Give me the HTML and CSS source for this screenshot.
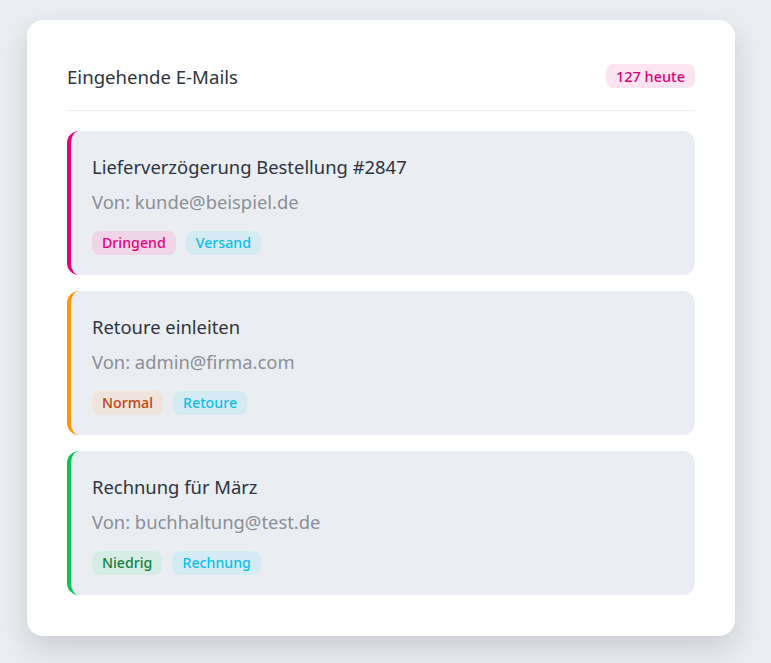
FILE: index.html
```html
<!DOCTYPE html>
<html lang="de">
<head>
<meta charset="utf-8">
<link rel="stylesheet" href="styles.css">
</head>
<body>
<div class="card">
  <div class="header">
    <span class="heading">Eingehende E-Mails</span>
    <span class="count">127 heute</span>
  </div>
  <div class="list">
    <div class="mail mail-urgent">
      <div class="subject">Lieferverzögerung Bestellung #2847</div>
      <div class="from">Von: kunde@beispiel.de</div>
      <div class="tags">
        <span class="tag tag-urgent">Dringend</span>
        <span class="tag tag-cat">Versand</span>
      </div>
    </div>
    <div class="mail mail-normal">
      <div class="subject">Retoure einleiten</div>
      <div class="from">Von: admin@firma.com</div>
      <div class="tags">
        <span class="tag tag-normal">Normal</span>
        <span class="tag tag-cat">Retoure</span>
      </div>
    </div>
    <div class="mail mail-low">
      <div class="subject">Rechnung für März</div>
      <div class="from">Von: buchhaltung@test.de</div>
      <div class="tags">
        <span class="tag tag-low">Niedrig</span>
        <span class="tag tag-cat">Rechnung</span>
      </div>
    </div>
  </div>
</div>
</body>
</html>
```
FILE: styles.css
```css
* { box-sizing: border-box; }
html, body { margin: 0; }
html { background: #eaedf2; }
body {
  min-height: 100vh;
  background: #eaedf2;
  font-family: "Noto Sans", "Open Sans", sans-serif;
  padding: 20px 36px 0 27px;
}
.card {
  width: 708px;
  background: #ffffff;
  border-radius: 16px;
  padding: 40px 40px 41px 40px;
  box-shadow: 0 12px 30px rgba(0, 0, 0, 0.14);
}
.header {
  display: flex;
  justify-content: space-between;
  align-items: center;
  height: 30px;
  padding-top: 1px;
  padding-bottom: 19px;
  box-sizing: content-box;
  border-bottom: 1px solid #eceef1;
  margin-bottom: 20px;
}
.heading {
  font-size: 18.6px;
  color: #2d3440;
}
.count {
  background: #fce4f1;
  color: #e0007a;
  font-size: 14.5px;
  font-weight: 500;
  padding: 2px 10px;
  border-radius: 8px;
  line-height: 20px;
}
.list {
  display: flex;
  flex-direction: column;
  gap: 16px;
}
.mail {
  background: #eaedf2;
  border-radius: 12px;
  border-left: 4px solid;
  padding: 23px 21px 20px 21px;
  height: 144px;
}
.mail-urgent { border-left-color: #e6007e; }
.mail-normal { border-left-color: #ff9800; }
.mail-low { border-left-color: #00c853; }
.subject {
  font-size: 18.4px;
  color: #2d3440;
  line-height: 26px;
}
.from {
  font-size: 18.4px;
  color: #8a8f98;
  line-height: 26px;
  margin-top: 9px;
}
.tags {
  display: flex;
  gap: 10px;
  margin-top: 16px;
}
.tag {
  font-size: 14.2px;
  font-weight: 500;
  padding: 2px 10px;
  line-height: 20px;
  border-radius: 8px;
}
.tag-urgent { background: #f0d5e8; color: #e6007e; }
.tag-cat { background: #d4ebf4; color: #0bbfe6; }
.tag-normal { background: #f0e4dc; color: #c2410c; }
.tag-low { background: #d5ede4; color: #15803d; }
```
